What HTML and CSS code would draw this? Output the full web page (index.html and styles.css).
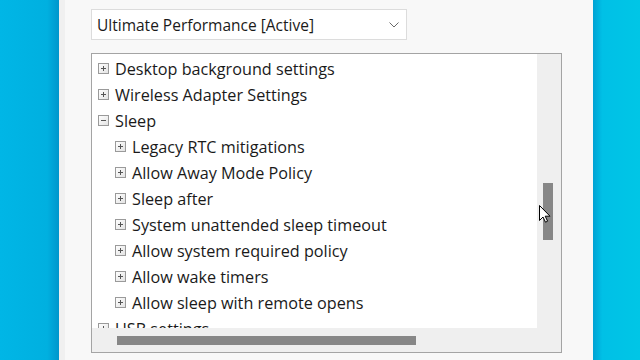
FILE: index.html
```html
<!DOCTYPE html>
<html lang="en">
<head>
    <meta charset="UTF-8">
    <meta name="viewport" content="width=device-width, initial-scale=1.0">
    <title>Power Options - Advanced settings</title>
    <link rel="stylesheet" href="styles.css">
</head>
<body>

<div class="desktop">
    <div class="bg-left"></div>
    <div class="window">
        <div class="plan-select">
            <span>Ultimate Performance [Active]</span>
            <svg class="chevron" width="10" height="6" viewBox="0 0 10 6">
                <path d="M0.5 0.5 L5 5 L9.5 0.5" fill="none" stroke="#6a6a6a" stroke-width="1"/>
            </svg>
        </div>
        <div class="tree">
            <div class="tree-body">
                <div class="rows">
                    <div class="row"><svg class="box"><use href="#plus"/></svg>Desktop background settings</div>
                    <div class="row"><svg class="box"><use href="#plus"/></svg>Wireless Adapter Settings</div>
                    <div class="row"><svg class="box"><use href="#minus"/></svg>Sleep</div>
                    <div class="row child"><svg class="box"><use href="#plus"/></svg>Legacy RTC mitigations</div>
                    <div class="row child"><svg class="box"><use href="#plus"/></svg>Allow Away Mode Policy</div>
                    <div class="row child"><svg class="box"><use href="#plus"/></svg>Sleep after</div>
                    <div class="row child"><svg class="box"><use href="#plus"/></svg>System unattended sleep timeout</div>
                    <div class="row child"><svg class="box"><use href="#plus"/></svg>Allow system required policy</div>
                    <div class="row child"><svg class="box"><use href="#plus"/></svg>Allow wake timers</div>
                    <div class="row child"><svg class="box"><use href="#plus"/></svg>Allow sleep with remote opens</div>
                    <div class="row"><svg class="box"><use href="#plus"/></svg>USB settings</div>
                </div>
                <div class="vscroll"><div class="vthumb"></div></div>
            </div>
            <div class="tree-foot">
                <div class="hscroll"><div class="hthumb"></div></div>
                <div class="corner"></div>
            </div>
            <svg class="cursor" width="12" height="18" viewBox="0 0 12 18">
                <path d="M0.5 0.5 L0.5 15.5 L4 12 L6.5 17.2 L8.6 16.2 L6.2 11.2 L11 11.2 Z" fill="#fff" stroke="#000" stroke-width="1" stroke-linejoin="round"/>
            </svg>
        </div>
    </div>
    <div class="bg-right"></div>
</div>

<svg width="0" height="0" class="defs">
    <defs>
        <linearGradient id="boxfill" x1="0" y1="0" x2="1" y2="1">
            <stop offset="0" stop-color="#ffffff"/>
            <stop offset="1" stop-color="#e2e2e2"/>
        </linearGradient>
        <g id="plus">
            <rect x="0.5" y="0.5" width="10" height="10" fill="url(#boxfill)" stroke="#9a9a9a"/>
            <path d="M3 5.5 H8 M5.5 3 V8" stroke="#555" stroke-width="1"/>
        </g>
        <g id="minus">
            <rect x="0.5" y="0.5" width="10" height="10" fill="url(#boxfill)" stroke="#9a9a9a"/>
            <path d="M3 5.5 H8" stroke="#555" stroke-width="1"/>
        </g>
    </defs>
</svg>

</body>
</html>
```

FILE: styles.css
```css
body {
    margin: 0;
    font-family: "Open Sans", "Noto Sans", sans-serif;
    color: #1a1a1a;
    overflow: hidden;
}
.desktop {
    display: flex;
    width: 640px;
    height: 360px;
}
.bg-left {
    width: 59px;
    background: linear-gradient(90deg, #00b6e6 0%, #00b0e0 80%, #0096cc 100%);
}
.bg-right {
    flex: 1;
    background: linear-gradient(90deg, #00a2d4 0%, #00c0e6 20%, #00c6e6 100%);
}
.window {
    width: 534px;
    box-sizing: border-box;
    background: #f8f8f8;
    border-left: 6px solid #f0f0f0;
    padding-left: 26px;
    padding-top: 9px;
}
.plan-select {
    width: 316px;
    height: 31px;
    box-sizing: border-box;
    background: #fff;
    border: 1px solid #dcdcdc;
    display: flex;
    align-items: center;
    justify-content: space-between;
    padding: 0 7px 0 5px;
    font-size: 15.5px;
}
.chevron {
    margin-top: 1px;
}
.tree {
    position: relative;
    margin-top: 13px;
    width: 471px;
    height: 300px;
    box-sizing: border-box;
    border: 1px solid #a4a4a4;
    background: #fff;
}
.tree-body {
    display: flex;
    height: 274px;
}
.rows {
    flex: 1;
    overflow: hidden;
    padding-top: 2px;
}
.row {
    height: 26px;
    display: flex;
    align-items: center;
    padding-left: 6px;
    font-size: 16.2px;
    white-space: nowrap;
}
.row.child {
    padding-left: 23px;
}
.box {
    width: 11px;
    height: 11px;
    margin-right: 6px;
    margin-top: -2px;
    flex-shrink: 0;
}
.vscroll {
    width: 24px;
    background: #efefef;
}
.vthumb {
    margin: 129px 0 0 6px;
    width: 10px;
    height: 57px;
    background: #878787;
}
.tree-foot {
    display: flex;
    height: 24px;
    background: #efefef;
}
.hscroll {
    flex: 1;
}
.hthumb {
    margin: 8px 0 0 25px;
    width: 299px;
    height: 9px;
    background: #878787;
}
.corner {
    width: 24px;
}
.cursor {
    position: absolute;
    left: 447px;
    top: 151px;
}
.defs {
    position: absolute;
}
```
